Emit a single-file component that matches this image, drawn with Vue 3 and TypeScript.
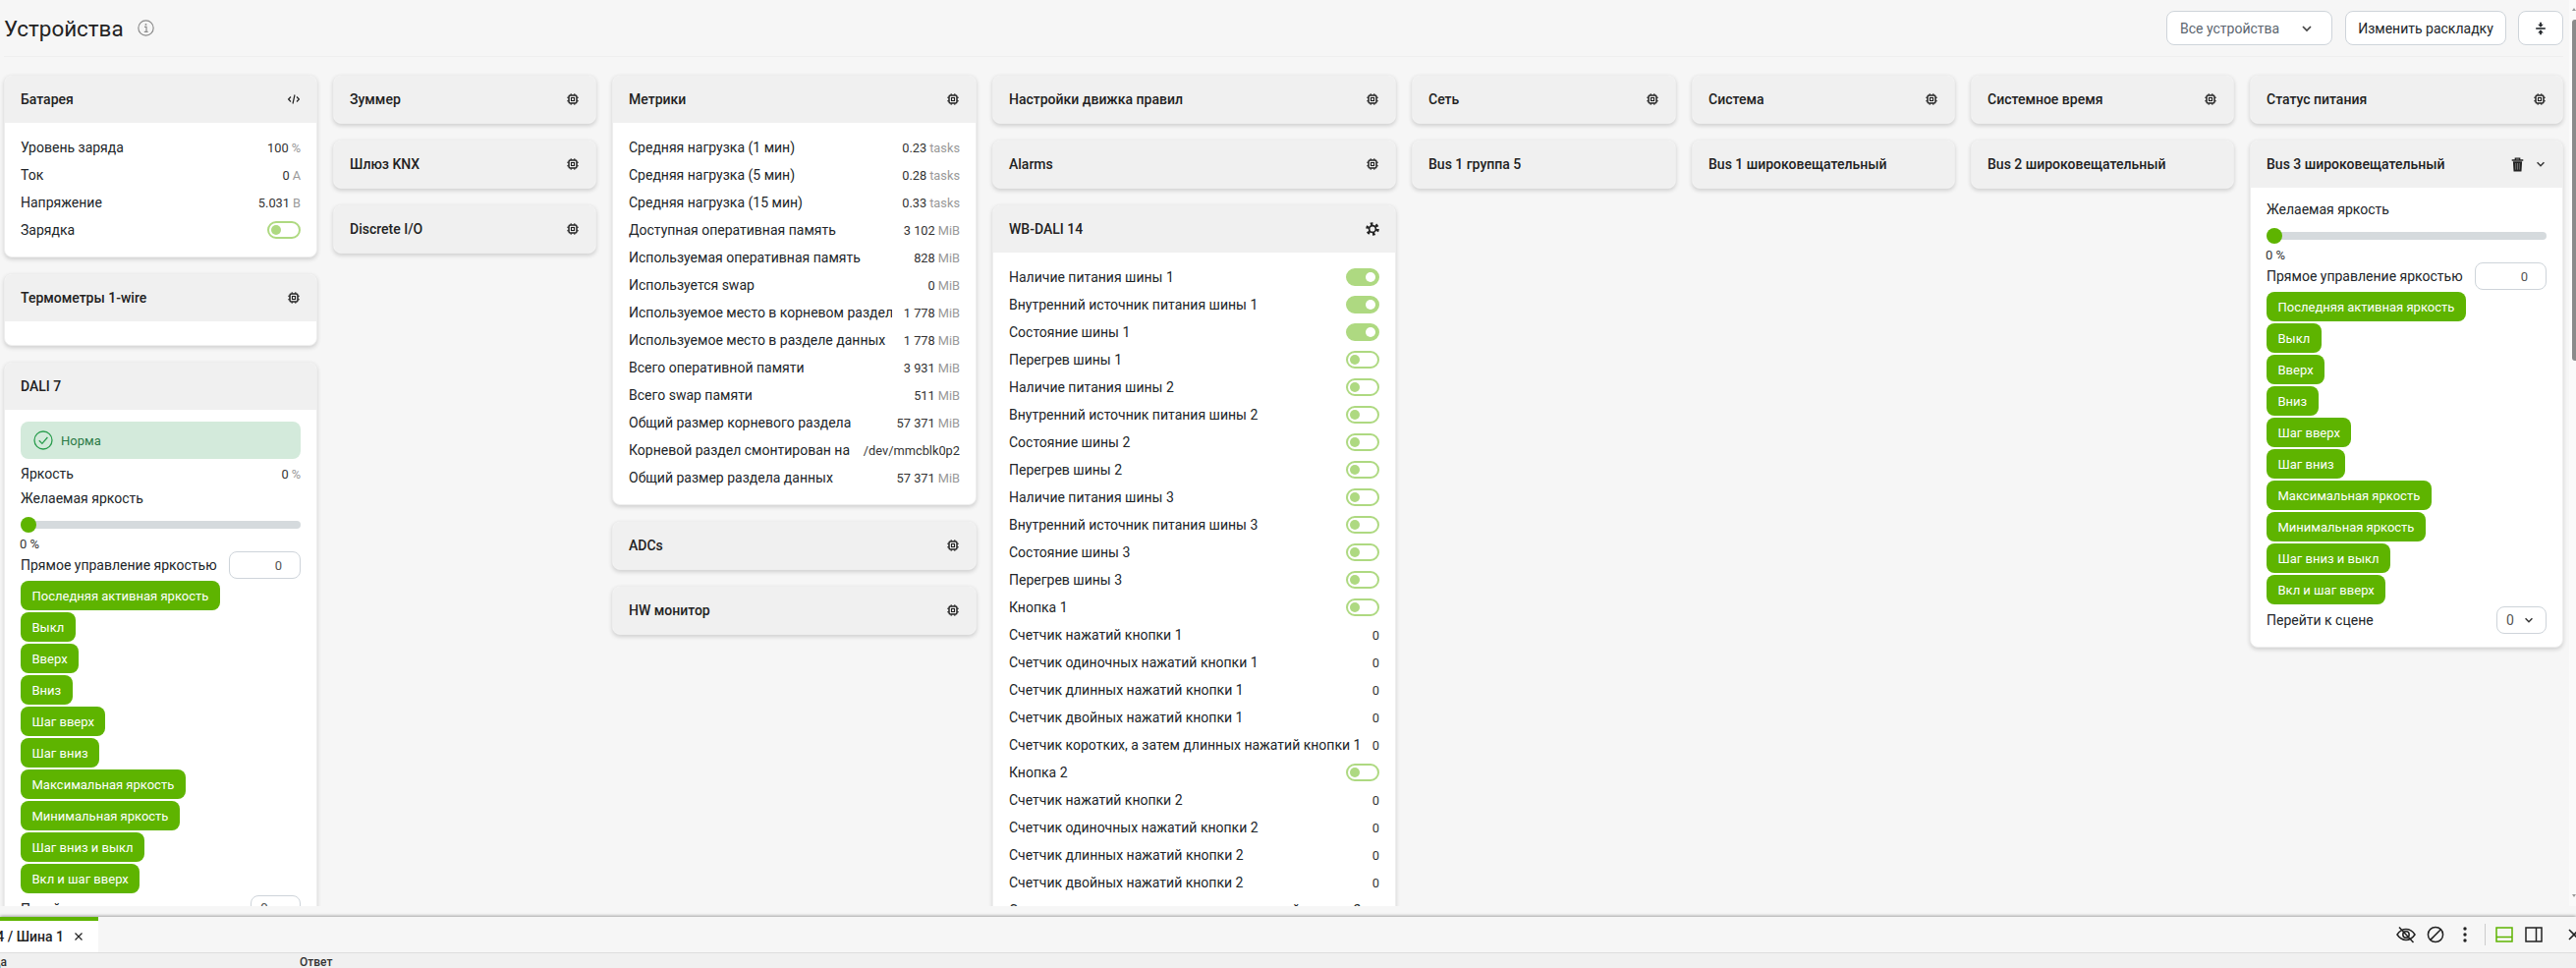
<script setup lang="ts">
type Row = { label: string; value?: string; unit?: string; toggle?: 'on' | 'off' }
type Card = {
    title: string
    icon?: 'chip' | 'code' | 'gear' | 'actions'
    rows?: Row[]
    empty?: boolean
    alert?: string
    controls?: boolean
}

const commands = [
    'Последняя активная яркость',
    'Выкл',
    'Вверх',
    'Вниз',
    'Шаг вверх',
    'Шаг вниз',
    'Максимальная яркость',
    'Минимальная яркость',
    'Шаг вниз и выкл',
    'Вкл и шаг вверх',
]

const onOff = (label: string, on = false): Row => ({ label, toggle: on ? 'on' : 'off' })
const counter = (label: string): Row => ({ label, value: '0' })

const busRows: Row[] = [1, 2, 3].flatMap((n) => [
    onOff(`Наличие питания шины ${n}`, n === 1),
    onOff(`Внутренний источник питания шины ${n}`, n === 1),
    onOff(`Состояние шины ${n}`, n === 1),
    onOff(`Перегрев шины ${n}`),
])

const buttonRows: Row[] = [1, 2].flatMap((n) => [
    onOff(`Кнопка ${n}`),
    counter(`Счетчик нажатий кнопки ${n}`),
    counter(`Счетчик одиночных нажатий кнопки ${n}`),
    counter(`Счетчик длинных нажатий кнопки ${n}`),
    counter(`Счетчик двойных нажатий кнопки ${n}`),
    counter(`Счетчик коротких, а затем длинных нажатий кнопки ${n}`),
])

const columns: { width: number; cards: Card[] }[] = [
    {
        width: 319,
        cards: [
            {
                title: 'Батарея',
                icon: 'code',
                rows: [
                    { label: 'Уровень заряда', value: '100', unit: '%' },
                    { label: 'Ток', value: '0', unit: 'А' },
                    { label: 'Напряжение', value: '5.031', unit: 'В' },
                    onOff('Зарядка'),
                ],
            },
            { title: 'Термометры 1-wire', icon: 'chip', empty: true },
            {
                title: 'DALI 7',
                alert: 'Норма',
                rows: [{ label: 'Яркость', value: '0', unit: '%' }],
                controls: true,
            },
        ],
    },
    {
        width: 268,
        cards: [
            { title: 'Зуммер', icon: 'chip' },
            { title: 'Шлюз KNX', icon: 'chip' },
            { title: 'Discrete I/O', icon: 'chip' },
        ],
    },
    {
        width: 371,
        cards: [
            {
                title: 'Метрики',
                icon: 'chip',
                rows: [
                    { label: 'Средняя нагрузка (1 мин)', value: '0.23', unit: 'tasks' },
                    { label: 'Средняя нагрузка (5 мин)', value: '0.28', unit: 'tasks' },
                    { label: 'Средняя нагрузка (15 мин)', value: '0.33', unit: 'tasks' },
                    { label: 'Доступная оперативная память', value: '3 102', unit: 'MiB' },
                    { label: 'Используемая оперативная память', value: '828', unit: 'MiB' },
                    { label: 'Используется swap', value: '0', unit: 'MiB' },
                    { label: 'Используемое место в корневом разделе', value: '1 778', unit: 'MiB' },
                    { label: 'Используемое место в разделе данных', value: '1 778', unit: 'MiB' },
                    { label: 'Всего оперативной памяти', value: '3 931', unit: 'MiB' },
                    { label: 'Всего swap памяти', value: '511', unit: 'MiB' },
                    { label: 'Общий размер корневого раздела', value: '57 371', unit: 'MiB' },
                    { label: 'Корневой раздел смонтирован на', value: '/dev/mmcblk0p2' },
                    { label: 'Общий размер раздела данных', value: '57 371', unit: 'MiB' },
                ],
            },
            { title: 'ADCs', icon: 'chip' },
            { title: 'HW монитор', icon: 'chip' },
        ],
    },
    {
        width: 411,
        cards: [
            { title: 'Настройки движка правил', icon: 'chip' },
            { title: 'Alarms', icon: 'chip' },
            { title: 'WB-DALI 14', icon: 'gear', rows: [...busRows, ...buttonRows] },
        ],
    },
    { width: 269, cards: [{ title: 'Сеть', icon: 'chip' }, { title: 'Bus 1 группа 5' }] },
    { width: 268, cards: [{ title: 'Система', icon: 'chip' }, { title: 'Bus 1 широковещательный' }] },
    { width: 268, cards: [{ title: 'Системное время', icon: 'chip' }, { title: 'Bus 2 широковещательный' }] },
    {
        width: 319,
        cards: [
            { title: 'Статус питания', icon: 'chip' },
            { title: 'Bus 3 широковещательный', icon: 'actions', controls: true },
        ],
    },
]

const gridColumns = columns.map((c) => `${c.width}px`).join(' ')
</script>

<template>
    <div class="app">
        <svg class="defs">
            <symbol id="chip" viewBox="0 0 14 14">
                <rect x="3" y="3" width="8" height="8" rx="1.6" fill="none" stroke="currentColor" stroke-width="1.5" />
                <rect x="5.5" y="5.5" width="3" height="3" fill="none" stroke="currentColor" stroke-width="1.1" />
                <path d="M5.2 1.200v1.600M8.800 1.200v1.600M5.200 11.200v1.600M8.800 11.200v1.600M1.200 5.200h1.600M1.200 8.800h1.600M11.200 5.200h1.600M11.200 8.800h1.600" stroke="currentColor" stroke-width="1.1" fill="none" />
            </symbol>
            <symbol id="code" viewBox="0 0 14 14">
                <path d="M4 4.500 1.600 7 4 9.500M10 4.500 12.400 7 10 9.500M8 2.500 6 11.500" fill="none" stroke="currentColor" stroke-width="1.2" />
            </symbol>
            <symbol id="gear" viewBox="0 0 14 14">
                <circle cx="7" cy="7" r="3.4" fill="none" stroke="currentColor" stroke-width="1.7" />
                <circle cx="7" cy="7" r="5.4" fill="none" stroke="currentColor" stroke-width="2.8" stroke-dasharray="2.6 3.05" />
            </symbol>
            <symbol id="chevron" viewBox="0 0 14 14">
                <path d="M3 5l4 4 4-4" fill="none" stroke="currentColor" stroke-width="1.7" />
            </symbol>
            <symbol id="trash" viewBox="0 0 14 14">
                <path d="M1.600 2.800h10.800M5 2.600V1h4v1.600" fill="none" stroke="currentColor" stroke-width="1.3" />
                <path d="M2.700 4h8.600l-.6 9.600H3.300z" fill="currentColor" />
                <path d="M5.300 5.600v6.200M7 5.600v6.200M8.700 5.600v6.200" stroke="#8a8a8a" stroke-width=".7" />
            </symbol>
        </svg>

        <div class="top">
            <div class="content">
                <header class="page-header">
                    <h1>Устройства</h1>
                    <svg class="info" viewBox="0 0 16 16">
                        <circle cx="8" cy="8" r="7.2" fill="none" stroke="currentColor" stroke-width="1.1" />
                        <path d="M6.600 7h1.900v4.400M6.400 11.600h3.600" fill="none" stroke="currentColor" stroke-width="1.1" />
                        <circle cx="8" cy="4.600" r=".9" fill="currentColor" />
                    </svg>
                    <div class="header-actions">
                        <div class="ctl select-all">
                            <span>Все устройства</span>
                            <svg class="ic-chevron"><use href="#chevron" /></svg>
                        </div>
                        <div class="ctl btn-layout">Изменить раскладку</div>
                        <div class="ctl btn-fold">
                            <svg viewBox="0 0 16 16" width="14" height="14">
                                <path d="M2.500 8h11" stroke="currentColor" stroke-width="1.8" />
                                <path d="M8 .8v3M8 12.200v3" stroke="currentColor" stroke-width="2" />
                                <path d="M4.800 3 8 6.600 11.200 3zM4.800 13 8 9.400l3.200 3.600z" fill="currentColor" />
                            </svg>
                        </div>
                    </div>
                </header>

                <div class="board" :style="{ gridTemplateColumns: gridColumns }">
                    <div v-for="col in columns" :key="col.width + col.cards[0].title" class="column">
                        <section v-for="card in col.cards" :key="card.title" class="card">
                            <div class="card-head">
                                <span>{{ card.title }}</span>
                                <svg v-if="card.icon && card.icon !== 'actions'" class="ic"><use :href="`#${card.icon}`" /></svg>
                                <div v-if="card.icon === 'actions'" class="head-actions">
                                    <svg class="ic-trash"><use href="#trash" /></svg>
                                    <svg class="ic-small"><use href="#chevron" /></svg>
                                </div>
                            </div>
                            <div v-if="card.rows || card.empty || card.controls" class="card-body" :class="{ 'is-empty': card.empty }">
                                <div v-if="card.alert" class="alert">
                                    <svg viewBox="0 0 20 20" width="20" height="20">
                                        <circle cx="10" cy="10" r="9" fill="none" stroke="currentColor" stroke-width="1.3" />
                                        <path d="M5.800 10.200 8.900 13.400 14.400 7" fill="none" stroke="currentColor" stroke-width="1.3" />
                                    </svg>
                                    <span>{{ card.alert }}</span>
                                </div>

                                <div v-for="row in card.rows" :key="row.label" class="row">
                                    <span class="label">{{ row.label }}</span>
                                    <span v-if="row.toggle" class="switch" :class="row.toggle"><i /></span>
                                    <span v-else class="value">{{ row.value }}<em v-if="row.unit">{{ row.unit }}</em></span>
                                </div>

                                <div v-if="card.controls" class="controls">
                                    <div class="ctl-label">Желаемая яркость</div>
                                    <div class="slider"><i /></div>
                                    <div class="slider-value">0 %</div>
                                    <div class="ctl-row">
                                        <span>Прямое управление яркостью</span>
                                        <div class="ctl number">0</div>
                                    </div>
                                    <button v-for="cmd in commands" :key="cmd" class="cmd">{{ cmd }}</button>
                                    <div class="ctl-row">
                                        <span>Перейти к сцене</span>
                                        <div class="ctl scene">
                                            <span>0</span>
                                            <svg class="ic-small"><use href="#chevron" /></svg>
                                        </div>
                                    </div>
                                </div>
                            </div>
                        </section>
                    </div>
                </div>
            </div>

            <div class="vbar">
                <b class="arrow up" />
                <div class="thumb" />
                <b class="arrow down" />
            </div>
        </div>

        <div class="panel">
            <div class="tabs">
                <div class="tab">
                    <span>WB-DALI 14 / Шина 1</span>
                    <svg viewBox="0 0 10 10" width="10" height="10">
                        <path d="M1.500 1.500l7 7M8.500 1.500l-7 7" stroke="currentColor" stroke-width="1.2" />
                    </svg>
                </div>
                <div class="tools">
                    <div class="tool">
                        <svg viewBox="0 0 20 20" width="20" height="20">
                            <path d="M1 10c2.400-3.600 5.400-5.400 9-5.400s6.600 1.800 9 5.400c-2.400 3.600-5.400 5.400-9 5.400S3.400 13.600 1 10z" fill="none" stroke="currentColor" stroke-width="1.5" />
                            <circle cx="10" cy="10" r="3.2" fill="none" stroke="currentColor" stroke-width="1.5" />
                            <path d="M3 2.500l14.500 15.500" stroke="currentColor" stroke-width="1.5" />
                        </svg>
                    </div>
                    <div class="tool">
                        <svg viewBox="0 0 18 18" width="18" height="18">
                            <circle cx="9" cy="9" r="7.600" fill="none" stroke="currentColor" stroke-width="1.5" />
                            <path d="M3.800 14.400 14.400 3.800" stroke="currentColor" stroke-width="1.5" />
                        </svg>
                    </div>
                    <div class="tool">
                        <svg viewBox="0 0 4 16" width="4" height="16">
                            <circle cx="2" cy="2" r="1.7" fill="currentColor" />
                            <circle cx="2" cy="8" r="1.7" fill="currentColor" />
                            <circle cx="2" cy="14" r="1.7" fill="currentColor" />
                        </svg>
                    </div>
                    <div class="sep" />
                    <div class="tool active">
                        <svg viewBox="0 0 18 16" width="18" height="16">
                            <rect x="1" y="1" width="16" height="14" fill="none" stroke="currentColor" stroke-width="1.5" />
                            <path d="M1 10.500h16" stroke="currentColor" stroke-width="1.5" />
                        </svg>
                    </div>
                    <div class="tool">
                        <svg viewBox="0 0 18 16" width="18" height="16">
                            <rect x="1" y="1" width="16" height="14" fill="none" stroke="currentColor" stroke-width="1.5" />
                            <path d="M11.500 1v14" stroke="currentColor" stroke-width="1.5" />
                        </svg>
                    </div>
                    <div class="tool close">
                        <svg viewBox="0 0 14 14" width="14" height="14">
                            <path d="M2 2l10 10M12 2 2 12" stroke="currentColor" stroke-width="1.6" />
                        </svg>
                    </div>
                </div>
            </div>
            <div class="table-head">
                <div class="th-first"><span>Команда</span></div>
                <div class="th-second">Ответ</div>
            </div>
        </div>
    </div>
</template>

<style scoped>
.app {
    display: flex;
    flex-direction: column;
    width: 2622px;
    height: 985px;
    overflow: hidden;
    font-family: Roboto, 'Noto Sans', sans-serif;
    font-size: 14px;
    color: #212529;
    background: #f6f6f6;
}

.defs {
    display: none;
}

.top {
    display: flex;
    height: 922px;
    flex: none;
}

.content {
    width: 2615px;
    height: 922px;
    padding: 0 6px 0 4px;
    box-sizing: border-box;
    overflow: hidden;
}

.page-header {
    display: flex;
    align-items: center;
    height: 58px;
    box-sizing: border-box;
    border-bottom: 1px solid #efefef;
    margin-bottom: 18px;
}

.page-header h1 {
    margin: 0;
    font-size: 22.4px;
    font-weight: 400;
    color: #222;
}

.info {
    width: 17px;
    height: 17px;
    margin-left: 14px;
    color: #8b8b8b;
}

.header-actions {
    display: flex;
    gap: 13px;
    margin-left: auto;
}

.ctl {
    display: flex;
    align-items: center;
    box-sizing: border-box;
    background: #fff;
    border: 1px solid #ced4da;
    border-radius: 8px;
}

.select-all {
    width: 169px;
    height: 35px;
    padding: 0 18px 0 13px;
    justify-content: space-between;
    color: #5c6670;
}

.ic-chevron {
    width: 14px;
    height: 14px;
    color: #444;
}

.btn-layout {
    width: 164px;
    height: 35px;
    justify-content: center;
}

.btn-fold {
    width: 46px;
    height: 35px;
    justify-content: center;
    margin-left: -1px;
}

.board {
    display: grid;
    gap: 16px;
    align-items: start;
}

.column {
    display: flex;
    flex-direction: column;
    gap: 16px;
}

.card {
    background: #fff;
    border: 1px solid #eee;
    border-radius: 8px;
    box-shadow: 0 2px 4px rgba(0, 0, 0, 0.16);
    overflow: hidden;
}

.card-head {
    display: flex;
    align-items: center;
    justify-content: space-between;
    height: 48px;
    padding: 0 16px;
    background: #f0f0f0;
    font-weight: 500;
    color: #222;
}

.ic {
    width: 14px;
    height: 14px;
    color: #222;
}

.head-actions {
    display: flex;
    align-items: center;
    gap: 10px;
}

.ic-trash {
    width: 15px;
    height: 15px;
    color: #222;
}

.ic-small {
    width: 12px;
    height: 12px;
    color: #333;
}

.card-body {
    padding: 11px 16px 13px;
}

.is-empty {
    height: 24px;
    box-sizing: border-box;
}

.alert {
    display: flex;
    align-items: center;
    gap: 8px;
    height: 38px;
    margin: 1px 0;
    padding-left: 13px;
    border-radius: 8px;
    background: #d3eadb;
    color: #2a9d4e;
    font-size: 13px;
}

.alert span {
    color: #2b7a46;
}

.row {
    display: flex;
    align-items: center;
    justify-content: space-between;
    gap: 12px;
    height: 28px;
}

.label {
    flex: 1;
    min-width: 0;
    overflow: hidden;
    white-space: nowrap;
}

.value {
    flex: none;
    font-size: 12.8px;
    color: #333;
}

.value em {
    margin-left: 3px;
    font-style: normal;
    color: #999;
}

.switch {
    flex: none;
    display: flex;
    align-items: center;
    width: 34px;
    height: 18px;
    box-sizing: border-box;
    padding: 0 2px;
    border: 2px solid #aed981;
    border-radius: 9px;
}

.switch i {
    width: 10px;
    height: 10px;
    border-radius: 50%;
    background: #aed981;
}

.switch.on {
    justify-content: flex-end;
    background: #aed981;
}

.switch.on i {
    background: #fff;
}

.controls {
    display: flex;
    flex-direction: column;
    align-items: flex-start;
    gap: 2px;
    margin-top: 1px;
}

.ctl-label {
    height: 20px;
    line-height: 20px;
    margin-bottom: -2px;
}

.slider {
    align-self: stretch;
    display: flex;
    align-items: center;
    height: 8px;
    margin: 13px 0 6px;
    border-radius: 4px;
    background: #d5dadd;
}

.slider i {
    width: 16px;
    height: 16px;
    border-radius: 50%;
    background: #5eb400;
}

.slider-value {
    height: 15px;
    line-height: 15px;
    margin: 0 0 -2px -1px;
    font-size: 13px;
    color: #333;
}

.ctl-row {
    align-self: stretch;
    display: flex;
    align-items: center;
    justify-content: space-between;
    height: 28px;
}

.number {
    width: 73px;
    height: 28px;
    justify-content: flex-end;
    padding-right: 18px;
    font-size: 13px;
    color: #555;
}

.scene {
    width: 51px;
    height: 28px;
    justify-content: space-between;
    padding: 0 11px 0 9px;
    color: #555;
}

.cmd {
    height: 30px;
    padding: 0 11.5px;
    border: 0;
    border-radius: 8px;
    background: #5eb400;
    color: #fff;
    font-family: inherit;
    font-size: 13px;
    white-space: nowrap;
}

.vbar {
    position: relative;
    width: 7px;
    height: 922px;
    background: #fafafa;
}

.thumb {
    position: absolute;
    left: 3px;
    top: 20px;
    width: 4px;
    height: 347px;
    border-radius: 3px 0 0 3px;
    background: #8a8a8a;
}

.arrow {
    position: absolute;
    left: 3px;
    width: 0;
    height: 0;
    border-left: 2.5px solid transparent;
    border-right: 2.5px solid transparent;
}

.arrow.up {
    top: 8px;
    border-bottom: 3px solid #999;
}

.arrow.down {
    top: 910px;
    border-top: 3px solid #999;
}

.panel {
    flex: none;
    height: 52px;
    margin-top: 11px;
    overflow: hidden;
    background: #f6f6f6;
    box-shadow: 0 -1px 3px rgba(0, 0, 0, 0.35);
    position: relative;
}

.tabs {
    display: flex;
    justify-content: space-between;
    height: 37px;
    box-sizing: border-box;
    border-bottom: 1px solid #ddd;
}

.tab {
    display: flex;
    align-items: center;
    justify-content: flex-end;
    gap: 10px;
    width: 100px;
    height: 36px;
    box-sizing: border-box;
    padding: 0 15px 0 0;
    border-top: 4px solid #5eb400;
    background: #fff;
    overflow: hidden;
    white-space: nowrap;
    font-weight: 500;
    color: #222;
}

.tab span,
.tab svg {
    flex: none;
}

.tools {
    display: flex;
    align-items: center;
    margin-right: -13px;
    color: #222;
}

.tool {
    display: flex;
    align-items: center;
    justify-content: center;
    width: 30px;
}

.tool.active {
    color: #5eb400;
}

.tool.close {
    margin-left: 11px;
}

.sep {
    width: 1px;
    height: 22px;
    margin: 0 4px 0 5px;
    background: #ccc;
}

.table-head {
    display: flex;
    height: 15px;
    padding-top: 2px;
    background: #f0f0f0;
    font-size: 12px;
    font-weight: 500;
    color: #333;
}

.th-first {
    display: flex;
    justify-content: flex-end;
    width: 7px;
    overflow: hidden;
}

.th-first span {
    flex: none;
}

.th-second {
    margin-left: 298px;
}
</style>

<style>
html,
body {
    margin: 0;
    overflow: hidden;
}
</style>
